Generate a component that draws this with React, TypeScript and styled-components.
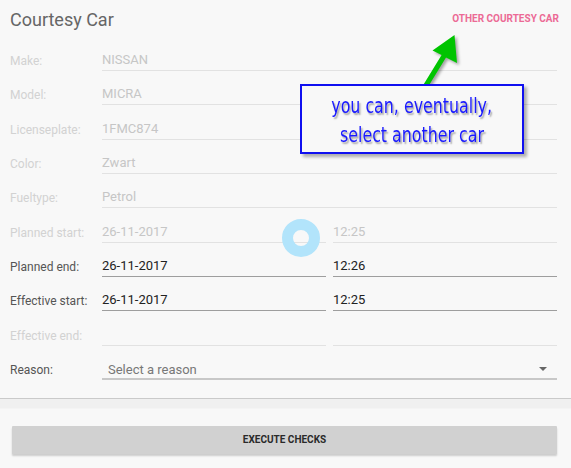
import { createGlobalStyle, styled } from 'styled-components'

const GlobalStyle = createGlobalStyle`
  html, body {
    margin: 0;
    padding: 0;
    background: #f8f8f8;
    font-family: Roboto, 'Noto Sans', sans-serif;
  }
  * { box-sizing: border-box; }
`

const Page = styled.div`
  position: relative;
  width: 571px;
  height: 468px;
  overflow: hidden;
  background: #f8f8f8;
`

const Form = styled.div`
  padding: 0 14px 0 10px;
`

const Header = styled.div`
  display: flex;
  justify-content: space-between;
  align-items: flex-start;
  height: 36.67px;
  padding-top: 8px;
`

const Title = styled.h1`
  margin: 0;
  font-size: 18px;
  line-height: 24px;
  font-weight: 400;
  color: #666;
`

const LinkButton = styled.span`
  margin-top: 4.5px;
  margin-right: -2px;
  font-size: 10px;
  line-height: 12px;
  font-weight: 700;
  color: #ec6a95;
  text-transform: uppercase;
`

const Row = styled.div`
  display: grid;
  grid-template-columns: 92px 1fr;
  align-items: end;
  height: 34.33px;
`

const Label = styled.div<{ $disabled?: boolean }>`
  padding-bottom: 2px;
  font-size: 12px;
  line-height: 16px;
  color: ${(p) => (p.$disabled ? '#d2d2d2' : '#555')};
  white-space: nowrap;
`

const Pair = styled.div`
  display: grid;
  grid-template-columns: 1fr 1fr;
  gap: 7px;
`

const Field = styled.div<{ $disabled?: boolean }>`
  height: 20px;
  padding-bottom: 2px;
  font-size: 13px;
  line-height: 17px;
  color: ${(p) => (p.$disabled ? '#c6c6c6' : '#222')};
  border-bottom: 1px solid ${(p) => (p.$disabled ? '#e2e2e2' : '#9e9e9e')};
  white-space: nowrap;
`

const Select = styled.div`
  position: relative;
  height: 21px;
  padding: 2px 0 0 6px;
  font-size: 13px;
  line-height: 17px;
  color: #777;
  border-bottom: 2px solid #c8c8c8;
`

const Caret = styled.span`
  position: absolute;
  right: 10px;
  top: 8px;
  width: 0;
  height: 0;
  border-left: 4px solid transparent;
  border-right: 4px solid transparent;
  border-top: 4px solid #666;
`

const Footer = styled.div`
  margin-top: 18px;
  border-top: 1px solid #cacaca;
  background: linear-gradient(#f0f0f0 0, #f0f0f0 9px, #f8f8f8 10px);
  padding: 27px 14px 14px 12px;
`

const ActionButton = styled.button`
  display: block;
  width: 100%;
  height: 28px;
  border: none;
  border-radius: 1px;
  background: #d1d1d1;
  box-shadow: 0 2px 2px rgba(0, 0, 0, 0.18);
  font-family: Roboto, sans-serif;
  font-size: 10px;
  font-weight: 700;
  color: #2a2a2a;
  text-transform: uppercase;
`

const Note = styled.div`
  position: absolute;
  left: 300px;
  top: 84px;
  width: 224px;
  height: 70px;
  padding-top: 1px;
  border: 2px solid #1010f0;
  background: #f8f8f8;
  box-shadow: 3px 3px 3px rgba(0, 0, 0, 0.3);
  display: flex;
  flex-direction: column;
  align-items: center;
  justify-content: center;
`

const NoteLine = styled.span`
  display: block;
  transform: scaleX(0.72);
  font-family: 'DejaVu Sans', sans-serif;
  font-size: 22px;
  line-height: 29px;
  color: #1a1aff;
  text-shadow: 2px 2px 2px rgba(0, 0, 0, 0.35);
  white-space: nowrap;
`

const Arrow = styled.svg`
  position: absolute;
  left: 0;
  top: 0;
  pointer-events: none;
  filter: drop-shadow(2px 2px 1.5px rgba(0, 0, 0, 0.35));
`

const Touch = styled.div`
  position: absolute;
  left: 282px;
  top: 219px;
  width: 38px;
  height: 38px;
  border-radius: 50%;
  border: 11px solid #b2e4fb;
`

type Item = { label: string; value?: string; time?: string; disabled?: boolean; pair?: boolean }

const items: Item[] = [
  { label: 'Make:', value: 'NISSAN', disabled: true },
  { label: 'Model:', value: 'MICRA', disabled: true },
  { label: 'Licenseplate:', value: '1FMC874', disabled: true },
  { label: 'Color:', value: 'Zwart', disabled: true },
  { label: 'Fueltype:', value: 'Petrol', disabled: true },
  { label: 'Planned start:', value: '26-11-2017', time: '12:25', disabled: true, pair: true },
  { label: 'Planned end:', value: '26-11-2017', time: '12:26', pair: true },
  { label: 'Effective start:', value: '26-11-2017', time: '12:25', pair: true },
  { label: 'Effective end:', value: '', time: '', disabled: true, pair: true },
]

export default function App() {
  return (
    <Page>
      <GlobalStyle />
      <Form>
        <Header>
          <Title>Courtesy Car</Title>
          <LinkButton>Other courtesy car</LinkButton>
        </Header>

        {items.map((item) => (
          <Row key={item.label}>
            <Label $disabled={item.disabled}>{item.label}</Label>
            {item.pair ? (
              <Pair>
                <Field $disabled={item.disabled}>{item.value}</Field>
                <Field $disabled={item.disabled}>{item.time}</Field>
              </Pair>
            ) : (
              <Field $disabled={item.disabled}>{item.value}</Field>
            )}
          </Row>
        ))}

        <Row>
          <Label>Reason:</Label>
          <Select>
            Select a reason
            <Caret />
          </Select>
        </Row>
      </Form>

      <Footer>
        <ActionButton>Execute checks</ActionButton>
      </Footer>

      <Arrow width="571" height="468" viewBox="0 0 571 468">
        <polygon
          points="422.8,85.8 427.2,88.2 446,57.5 457,63 454.5,35 432.5,50.5 441.6,55"
          fill="#00c400"
        />
      </Arrow>

      <Note>
        <NoteLine>you can, eventually,</NoteLine>
        <NoteLine>select another car</NoteLine>
      </Note>

      <Touch />
    </Page>
  )
}
